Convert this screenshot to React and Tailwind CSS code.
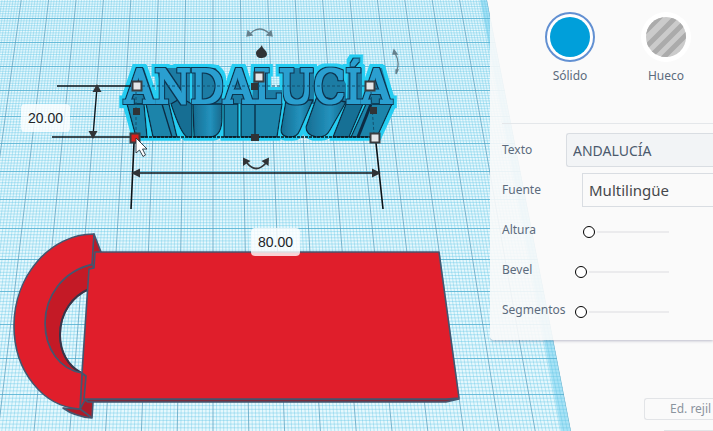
import React from "react";

const MAJOR_Y = [-6, 18, 42, 66, 90, 116, 143, 171, 199, 228, 259, 291, 324, 358, 394, 431];
const MAJOR_X = Array.from({ length: 20 }, (_, i) => i - 9);

const minorRows = MAJOR_Y.slice(0, -1).flatMap((y, i) =>
  Array.from({ length: 9 }, (_, n) => y + ((MAJOR_Y[i + 1] - y) * (n + 1)) / 10)
);
const minorCols = Array.from({ length: 191 }, (_, i) => (i - 90) / 10).filter((k) => !Number.isInteger(k));

const column = (k) => `M${213 + 27.4 * k} 0L${213 + 35.8 * k} 431`;
const row = (y) => `M0 ${y + 0.5}H600`;

function Workplane() {
  return (
    <g>
      <clipPath id="plane">
        <path d="M0 0H487L571 431H0Z" />
      </clipPath>
      <g clipPath="url(#plane)">
        <path d="M0 0H600V431H0Z" fill="#e6f8fd" />
        <path d="M480 0H487L571 431H561Z" fill="#a9e3f6" />
        <path d={minorRows.map(row).join("")} stroke="#62c6e6" strokeOpacity="0.42" />
        <path d={minorCols.map(column).join("")} stroke="#62c6e6" strokeOpacity="0.38" />
        <path d={MAJOR_Y.map(row).join("")} stroke="#55b2d2" strokeOpacity="0.85" />
        <path d={MAJOR_X.map(column).join("")} stroke="#559fbf" strokeOpacity="0.75" />
      </g>
    </g>
  );
}

function Keyring() {
  return (
    <g stroke="#44566f" strokeWidth="1.6" strokeLinejoin="round">
      <path
        d="M94 264C62 271 45 297 45 323C45 349 60 370 82 373C68 366 60 352 60 335C60 312 73 296 89 289Z"
        fill="#c41a26"
      />
      <path d="M89 289C73 296 60 312 60 335C60 352 68 366 81 373" fill="none" stroke="#3a3347" strokeWidth="2" />
      <path d="M63 408L80 409L84 399L93 402L92 418C82 417 71 414 63 408Z" fill="#ac1b29" />
      <path d="M82 373L86 376L85 400L80 409Z" fill="#d01d2a" />
      <path
        d="M94 234C50 234 14 276 14 326C14 371 43 407 80 409L82 373C60 370 45 349 45 323C45 297 62 271 93 264Z"
        fill="#e01e2b"
      />
      <path d="M94 234L101 252L95 268L92 264Z" fill="#b91b28" />
      <path d="M84 399H459L446 402H88Z" fill="#7c2b3a" />
      <path d="M95 252H439L459 398L446 399H84L86 376L82 373L89 269L94 268Z" fill="#e01e2b" />
      <path d="M80 409L91 417" />
    </g>
  );
}

function SolidText() {
  return (
    <g>
      <defs>
        <filter id="halo" x="-5%" y="-12%" width="110%" height="124%">
          <feMorphology in="SourceAlpha" operator="dilate" radius="3" result="wide" />
          <feFlood floodColor="#27cdf2" />
          <feComposite in2="wide" operator="in" result="glow" />
          <feMerge>
            <feMergeNode in="glow" />
            <feMergeNode in="SourceGraphic" />
          </feMerge>
        </filter>
        <filter id="face" x="-5%" y="-10%" width="110%" height="120%" colorInterpolationFilters="sRGB">
          <feMorphology in="SourceAlpha" operator="dilate" radius="2" result="outer" />
          <feFlood floodColor="#0d3450" />
          <feComposite in2="outer" operator="in" result="edge" />
          <feMorphology in="SourceGraphic" operator="dilate" radius="1" result="body" />
          <feMerge>
            <feMergeNode in="edge" />
            <feMergeNode in="body" />
          </feMerge>
        </filter>
        <linearGradient id="round" x1="0" x2="1">
          <stop offset="0" stopColor="#176d92" />
          <stop offset="0.6" stopColor="#2292bd" />
          <stop offset="1" stopColor="#18698c" />
        </linearGradient>
      </defs>
      <g filter="url(#halo)">
        <path
          d="M136 68H144L156 104H127ZM156 68H190V104H166ZM192 68H216L222 84V104H192ZM235 68H243L253 104H226ZM254 68H268V90H282V104H252ZM284 68H314V104H288ZM322 72L338 68L346 84V104H320ZM348 68H362V104H347ZM374 68H382L392 104H364Z"
          fill="#1b7ca4"
        />
        <g fill="#1c84aa" stroke="#0b2b42" strokeWidth="1.3" strokeLinejoin="round">
          <path d="M127 104H144L147 137H136Z" />
          <path d="M146 104H169L177 137H153Z" />
          <path d="M162 104L172 137" fill="none" />
          <path d="M171 104L181 98L192 104V137H187Q181 134 171 104Z" fill="#166e93" />
          <path d="M193 104H222V118Q222 136 211 137H194Z" fill="url(#round)" />
          <path d="M224 104H238V137H224Z" />
          <path d="M241 104H282L277 137H241Z" />
          <path d="M255 104V137" fill="none" />
          <path d="M286 100H313L300 130Q297 138 288 137Q281 136 281 130Z" fill="url(#round)" />
          <path d="M317 96L346 102L330 130Q326 138 316 137Q306 135 306 127Z" fill="url(#round)" />
          <path d="M346 104H363L349 137H333Z" fill="#176f95" />
          <path d="M366 104H392L377 137H351Z" />
          <path d="M371 104L358 137" fill="none" strokeWidth="3" />
        </g>
        <text
          x="258"
          y="103"
          textAnchor="middle"
          filter="url(#face)"
          className="fill-[#2b9fd0] font-['DejaVu_Serif_Condensed','DejaVu_Serif',serif] text-[46px]"
        >
          ANDALUCÍA
        </text>
      </g>
    </g>
  );
}

function Dimensions() {
  return (
    <g>
      <g stroke="#0d1318" strokeWidth="1.3" fill="none">
        <path d="M57 86H131M52 137H131M97 88L93 136M134 173H378" />
        <path d="M134 143L131 209M376 143L383 209" strokeWidth="1.6" />
        <path d="M137 137H372" strokeDasharray="3 1" />
        <path d="M142 86H365M136 92V134M371 92L374 134" strokeDasharray="3 2" strokeWidth="1" stroke="#12516f" />
      </g>
      <g fill="#303336">
        <path d="M97 84L101.500 92H92.500ZM93 139L88.500 131H97.500ZM131 173L140 168.500V177.500ZM381 173L372 168.500V177.500Z" />
        <path d="M133 108h7v7h-7zM370 107h7v7h-7zM251 134h8v7h-8zM251 83h7v7h-7z" />
        <path d="M262 45C262 49 267 50 267 54C267 57 264 58 261 58C258 58 256 56 256 53C256 50 260 49 262 45Z" />
        <path d="M243 157.500V166L250.500 161ZM269 157.500L261.500 161L268.500 166Z" />
      </g>
      <path d="M247 163Q256 174 266 163" fill="none" stroke="#303336" strokeWidth="1.800" />
      <g stroke="#66808c" fill="none" strokeWidth="1.300">
        <path d="M250 34Q259 24 270 34M395 53Q400 62 397 70" />
        <path d="M247 36L248 31L252 35ZM272 36L271 31L267 35ZM393 54L394 50L397 54ZM396 74L396 70L398 70Z" fill="#66808c" />
      </g>
      <g fill="#e4e6e8" stroke="#3a3d40" strokeWidth="2">
        <path d="M132.500 81.500h9v9h-9zM365.500 81.500h9v9h-9zM254.500 72.500h9v9h-9zM370.500 133.500h9v9h-9z" />
        <path d="M130.500 133.500h9v9h-9z" fill="#d5201c" />
      </g>
      <path
        d="M136 138V153L139.500 150L143 156.500L145.500 155L142.500 149H147Z"
        fill="#ffffff"
        stroke="#26323c"
        strokeWidth="0.900"
      />
    </g>
  );
}

const dimensionBox =
  "absolute h-7 w-[49px] rounded-sm bg-white/80 text-center font-['Liberation_Sans',Arial,sans-serif] text-sm text-[#202428] outline-none";

function SliderRow({ id, label, width }) {
  return (
    <div className="flex h-10 items-center justify-between pr-11 pl-3">
      <label htmlFor={id}>{label}</label>
      <input
        id={id}
        type="range"
        min="0"
        max="100"
        defaultValue="0"
        className={`${width} mt-1 h-3 appearance-none bg-transparent [&::-webkit-slider-runnable-track]:h-[2px] [&::-webkit-slider-runnable-track]:bg-[#ebebed] [&::-webkit-slider-thumb]:-mt-[5px] [&::-webkit-slider-thumb]:size-3 [&::-webkit-slider-thumb]:appearance-none [&::-webkit-slider-thumb]:rounded-full [&::-webkit-slider-thumb]:border [&::-webkit-slider-thumb]:border-black [&::-webkit-slider-thumb]:bg-white [&::-webkit-slider-thumb]:shadow-[0_0_0_2px_#fafafa]`}
      />
    </div>
  );
}

function Inspector() {
  return (
    <section className="overflow-hidden rounded-bl bg-[#fafafa]/90 pb-[10px] shadow-[0_1px_3px_rgba(40,40,90,0.3)]">
      <div className="flex h-[123px] pt-3 pl-8">
        <button type="button" className="flex w-24 shrink-0 flex-col items-center gap-1.5">
          <span className="flex size-[50px] items-center justify-center rounded-full border-2 border-[#6290d2] bg-white">
            <span className="size-10 rounded-full bg-[#009fda]" />
          </span>
          Sólido
        </button>
        <button type="button" className="flex w-24 shrink-0 flex-col items-center gap-1.5">
          <span className="flex size-[50px] items-center justify-center rounded-full bg-white">
            <svg viewBox="0 0 40 40" className="size-10 rounded-full" aria-hidden="true">
              <path d="M0 0H40V40H0Z" fill="#cbcbcb" />
              <path d="M-4 18L18 -4M-4 34L34 -4M-2 46L46 -2M12 46L46 12M27 46L46 27" stroke="#ababab" strokeWidth="5" />
            </svg>
          </span>
          Hueco
        </button>
      </div>
      <hr className="mb-[6px] ml-3 border-[#e4e7ea]" />
      <div className="flex h-10 items-center pl-3">
        <label htmlFor="texto" className="w-16 shrink-0">
          Texto
        </label>
        <input
          id="texto"
          defaultValue="ANDALUCÍA"
          className="h-[34px] min-w-0 flex-1 rounded-l-[3px] border border-r-0 border-[#d9dde2] bg-[#f2f4f6] px-1.5 text-sm text-[#4b5a6d]"
        />
      </div>
      <div className="flex h-10 items-center pl-3">
        <label htmlFor="fuente" className="w-20 shrink-0">
          Fuente
        </label>
        <select
          id="fuente"
          className="h-[34px] min-w-0 flex-1 appearance-none border border-r-0 border-[#d9dde2] bg-[#fafafa] px-1.5 text-[15px] text-[#45484c]"
        >
          <option>Multilingüe</option>
        </select>
      </div>
      <SliderRow id="altura" label="Altura" width="w-[86px]" />
      <SliderRow id="bevel" label="Bevel" width="w-[94px]" />
      <SliderRow id="segmentos" label="Segmentos" width="w-[94px]" />
    </section>
  );
}

export default function App() {
  return (
    <main className="relative flex min-h-screen justify-end overflow-hidden bg-[#fafafa] font-['Noto_Sans',sans-serif] text-xs text-[#5c6b7d]">
      <div className="absolute inset-0">
        <svg viewBox="0 0 713 431" preserveAspectRatio="xMinYMin slice" className="size-full">
          <Workplane />
          <Keyring />
          <SolidText />
          <Dimensions />
        </svg>
        <input aria-label="Alto" defaultValue="20.00" className={`${dimensionBox} top-[104px] left-[21px]`} />
        <input aria-label="Ancho" defaultValue="80.00" className={`${dimensionBox} top-[228px] left-[251px]`} />
      </div>
      <aside className="relative flex h-screen w-[223px] flex-col overflow-hidden">
        <Inspector />
        <button
          type="button"
          className="mt-[58px] ml-[154px] h-[22px] shrink-0 rounded-l-[3px] border border-r-0 border-[#e2e4e7] pl-[25px] text-left whitespace-nowrap text-[#8b949e]"
        >
          Ed. rejil
        </button>
        <hr className="mt-[10px] ml-[174px] border-[#e2e4e7]" />
      </aside>
    </main>
  );
}
